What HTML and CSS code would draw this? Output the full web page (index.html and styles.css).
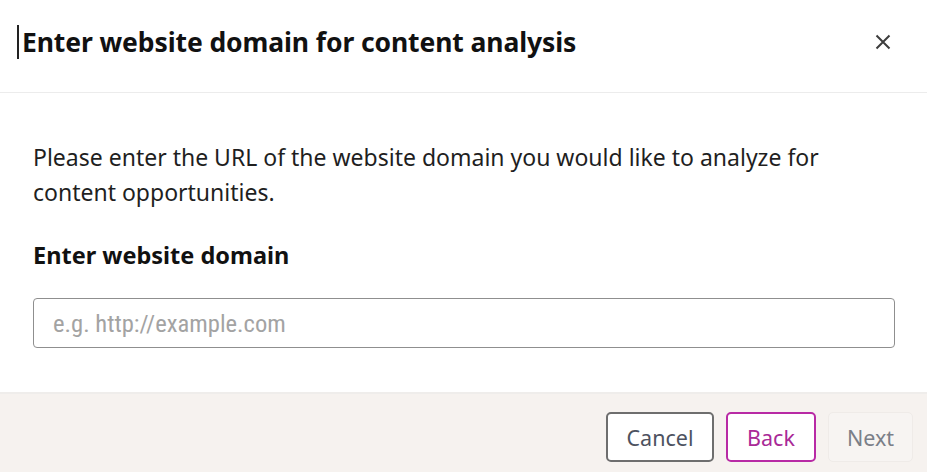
FILE: index.html
```html
<!DOCTYPE html>
<html lang="en">
<head>
<meta charset="utf-8">
<title>Enter website domain</title>
<link rel="stylesheet" href="styles.css">
</head>
<body>
<div class="modal">
  <header class="modal-header">
    <h1 class="modal-title"><span class="caret"></span>Enter website domain for content analysis</h1>
    <button class="close" aria-label="Close">
      <svg width="16" height="16" viewBox="0 0 16 16"><path d="M1.5 1.5 L14.5 14.5 M14.5 1.5 L1.5 14.5" stroke="#3d3d3d" stroke-width="2" fill="none"/></svg>
    </button>
  </header>
  <main class="modal-body">
    <p class="intro">Please enter the URL of the website domain you would like to analyze for content opportunities.</p>
    <label class="field-label" for="domain">Enter website domain</label>
    <input id="domain" class="field-input" type="text" placeholder="e.g. http://example.com">
  </main>
  <footer class="modal-footer">
    <button class="btn btn-cancel">Cancel</button>
    <button class="btn btn-back">Back</button>
    <button class="btn btn-next">Next</button>
  </footer>
</div>
</body>
</html>
```
FILE: styles.css
```css
* { box-sizing: border-box; }
html, body { margin: 0; padding: 0; background: #fff; }
body { font-family: "Noto Sans", "Open Sans", sans-serif; color: #161616; }
.modal { width: 927px; height: 472px; display: flex; flex-direction: column; }
.modal-header {
  height: 93px;
  border-bottom: 1px solid #ececec;
  display: flex;
  align-items: center;
  justify-content: space-between;
  padding: 0 36px 8px 17px;
}
.modal-title {
  margin: 0;
  font-size: 26.5px;
  font-weight: 700;
  display: flex;
  align-items: center;
  color: #111;
  letter-spacing: -0.1px;
}
.caret { display: inline-block; width: 2px; height: 34px; background: #222; margin-right: 3px; }
.close { background: none; border: 0; padding: 0; width: 16px; height: 16px; display: flex; }
.modal-body { flex: 1; padding: 47px 32px 0 33px; display: flex; flex-direction: column; }
.intro { margin: 0; font-size: 23px; line-height: 35px; color: #1f1f1f; }
.field-label { margin-top: 30px; font-size: 23.5px; line-height: 30px; font-weight: 700; color: #111; }
.field-input {
  margin-top: 28px;
  height: 50px;
  border: 1.5px solid #8f8f8f;
  border-radius: 4px;
  padding: 0 19px;
  font-family: "Liberation Sans Narrow", "Roboto Condensed", "Noto Sans", sans-serif;
  font-size: 24.6px;
  color: #161616;
}
.field-input::placeholder { color: #a3a3a3; }
.modal-footer {
  height: 80px;
  background: #f6f2ef;
  border-top: 2px solid #efedeb;
  display: flex;
  justify-content: flex-end;
  align-items: flex-start;
  gap: 12px;
  padding: 18px 14px 0 0;
}
.btn {
  height: 50px;
  font-family: "Noto Sans", "Open Sans", sans-serif;
  font-size: 21.5px;
  border-radius: 5px;
  background: #fff;
  padding: 0;
}
.btn-cancel { width: 108px; border: 2px solid #6e6e6e; color: #4d5260; }
.btn-back { width: 90px; border: 2px solid #b82aa5; color: #a92a97; }
.btn-next { width: 85px; border: 1px solid #efebe8; background: #f7f4f2; color: #7b7f88; }
```
